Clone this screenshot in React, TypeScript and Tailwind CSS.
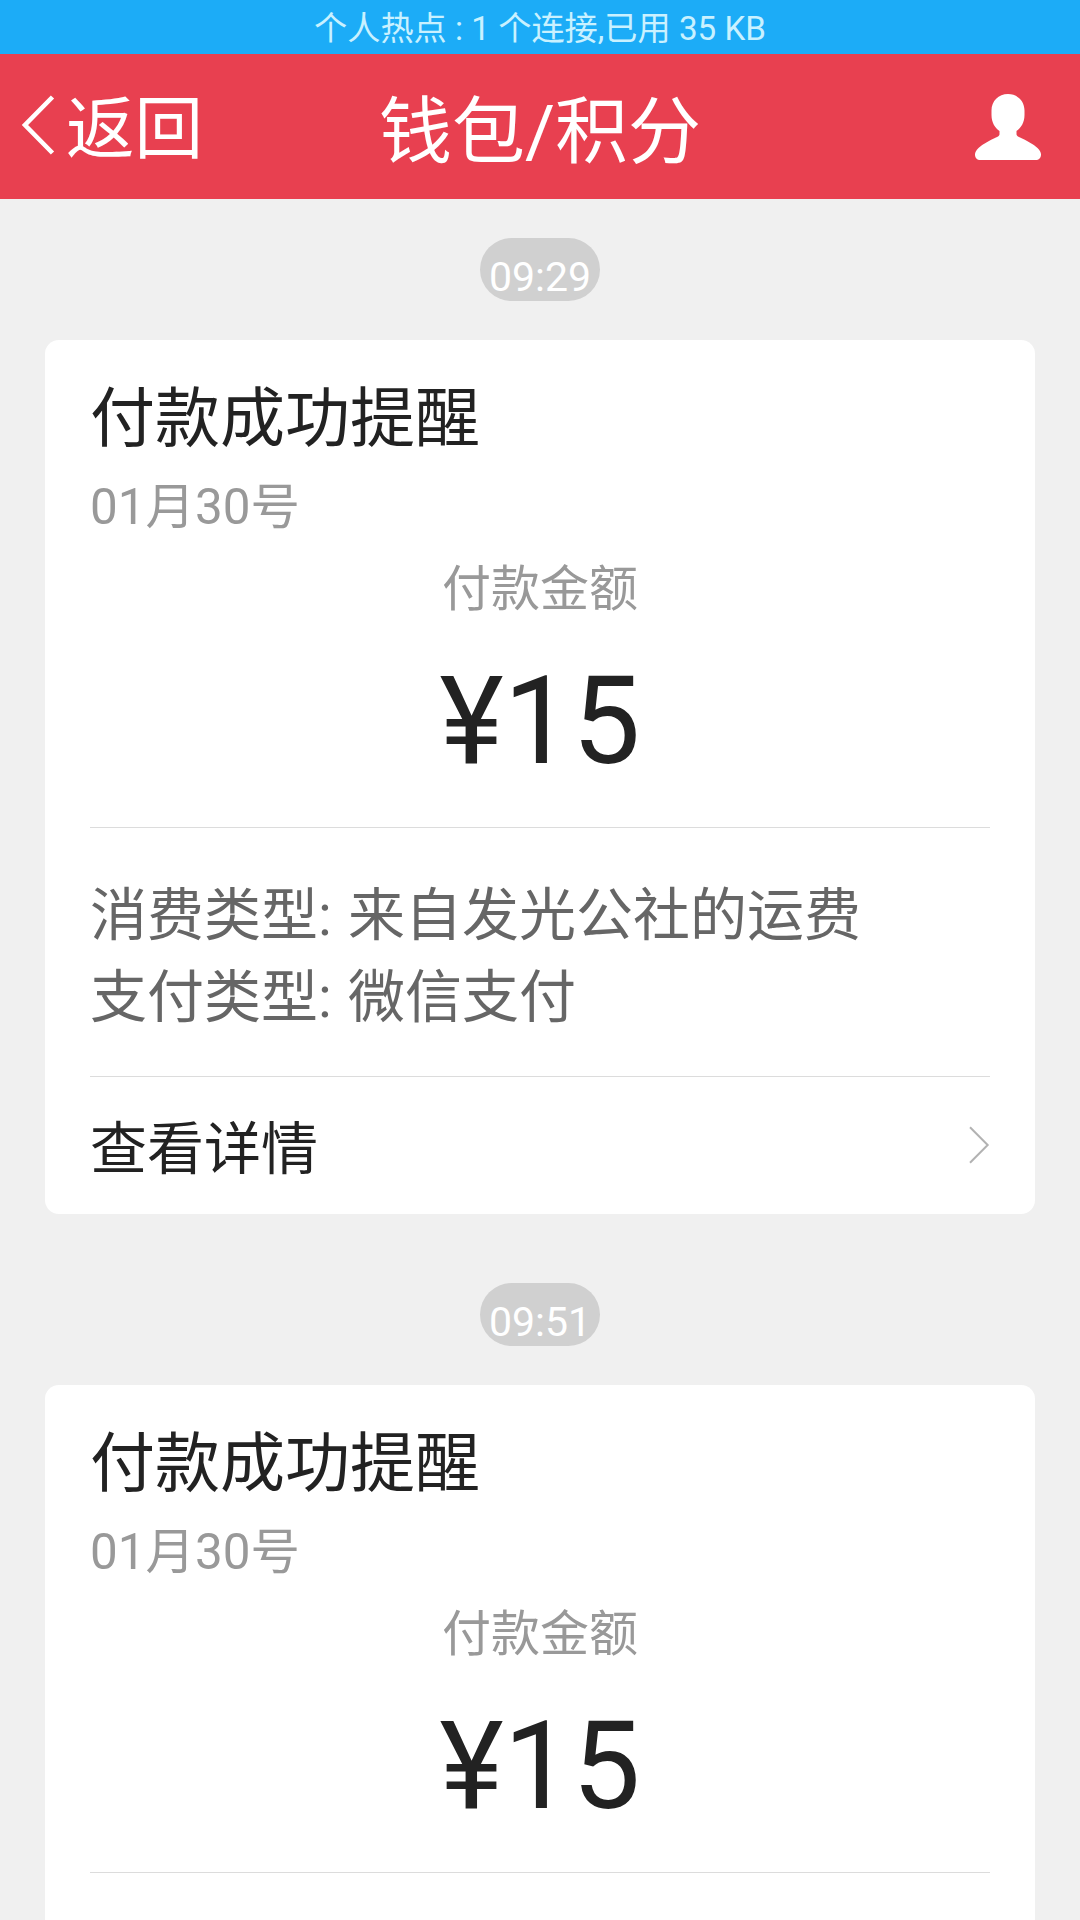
interface Message {
  time: string;
  title: string;
  date: string;
  amountLabel: string;
  amount: string;
  details?: { label: string; value: string }[];
}

const messages: Message[] = [
  {
    time: "09:29",
    title: "付款成功提醒",
    date: "01月30号",
    amountLabel: "付款金额",
    amount: "¥15",
    details: [
      { label: "消费类型", value: "来自发光公社的运费" },
      { label: "支付类型", value: "微信支付" },
    ],
  },
  {
    time: "09:51",
    title: "付款成功提醒",
    date: "01月30号",
    amountLabel: "付款金额",
    amount: "¥15",
  },
];

function BackIcon() {
  return (
    <svg className="mb-[3px] h-[60px] w-[36px]" viewBox="0 0 36 60" fill="none">
      <path d="M32.5 2L5 30l27.5 28" stroke="#fff" strokeWidth="4.6" />
    </svg>
  );
}

function UserIcon() {
  return (
    <svg className="h-[66px] w-[66px]" viewBox="0 0 66 66" fill="#fff">
      <path d="M33 0C42.5 0 49.5 7 49.5 16.5V21C49.5 28.500 46 34 41.500 37V40.500C42 42 43 42.600 44.500 43.300C52 46.800 58 50 62.500 54C65 56.400 66 58.500 66 60.500C66 64 64 66 60.500 66H5.500C2 66 0 64 0 60.500C0 58.500 1 56.400 3.500 54C8 50 14 46.800 21.500 43.300C23 42.600 24 42 24.500 40.500V37C20 34 16.500 28.500 16.500 21V16.500C16.500 7 23.500 0 33 0Z" />
    </svg>
  );
}

function ArrowIcon() {
  return (
    <svg className="mb-[2px] h-[40px] w-[22px]" viewBox="0 0 22 40" fill="none">
      <path d="M2 2.200L19.700 20L2 37.800" stroke="#b2b2b2" strokeWidth="2" />
    </svg>
  );
}

function StatusBar() {
  return (
    <div className="h-[54px] bg-[#1cacf7] pt-[2px] text-center text-[33.2px] leading-[54px] whitespace-pre text-[#c9f1ff]">
      个人热点 : 1 个连接,已用 35 KB
    </div>
  );
}

function NavBar() {
  return (
    <header className="grid h-[145px] grid-cols-[1fr_auto_1fr] items-center bg-[#e84050] text-white">
      <button type="button" className="flex items-center pl-[20px]">
        <BackIcon />
        <span className="ml-[10px] pt-[7px] text-[68.5px] leading-[80px]">返回</span>
      </button>
      <h1 className="pt-[10px] text-[73px] leading-[90px]">钱包/积分</h1>
      <button type="button" className="mr-[39px] justify-self-end">
        <UserIcon />
      </button>
    </header>
  );
}

function TimeBadge({ time }: { time: string }) {
  return (
    <div className="mx-auto flex h-[63px] w-[120px] justify-center rounded-full bg-[#d0d0d0] pt-[14px] text-[41px] leading-[50px] text-white">
      {time}
    </div>
  );
}

function MessageCard({ message }: { message: Message }) {
  return (
    <article className="mx-[45px] mt-[39px] rounded-[14px] bg-white px-[45px] pt-[39px]">
      <h2 className="text-[65px] leading-[80px] text-[#222]">{message.title}</h2>
      <p className="mt-[18px] text-[49.4px] leading-[60px] text-[#999]">{message.date}</p>
      <p className="mt-[23px] text-center text-[49px] leading-[60px] text-[#999]">
        {message.amountLabel}
      </p>
      <p className="mt-[32px] text-center text-[122px] leading-[140px] text-[#222]">
        {message.amount}
      </p>
      <hr className="mt-[35px] border-[#dcdcdc]" />
      {message.details ? (
        <>
          <div className="border-b border-[#dcdcdc] pt-[47px] pb-[37px] text-[57px] leading-[82px] text-[#666]">
            {message.details.map((row) => (
              <p key={row.label}>
                {row.label}
                <span className="tracking-[1px]">: </span>
                {row.value}
              </p>
            ))}
          </div>
          <div className="flex h-[137px] items-center justify-between">
            <span className="pt-[8px] text-[57px] leading-[82px] text-[#222]">查看详情</span>
            <ArrowIcon />
          </div>
        </>
      ) : (
        <div className="h-[137px]" />
      )}
    </article>
  );
}

export default function App() {
  return (
    <div className="h-[1920px] w-[1080px] overflow-hidden bg-[#f0f0f0] font-['Roboto','Noto_Sans_CJK_SC',sans-serif]">
      <StatusBar />
      <NavBar />
      <main className="flex flex-col gap-[69px] pt-[39px]">
        {messages.map((message) => (
          <section key={message.time}>
            <TimeBadge time={message.time} />
            <MessageCard message={message} />
          </section>
        ))}
      </main>
    </div>
  );
}
